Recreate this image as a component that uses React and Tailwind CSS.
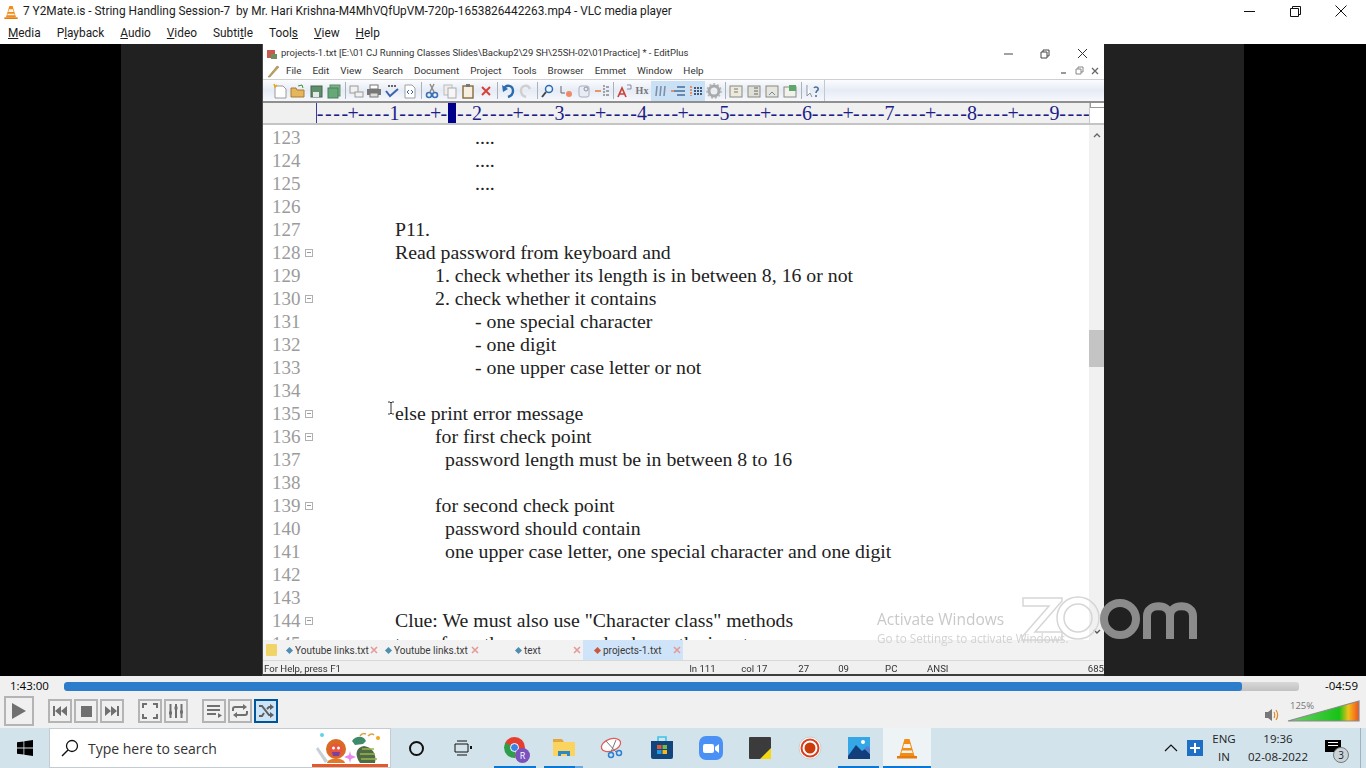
import React from 'react';

const uiFont = { fontFamily: 'Roboto, "Open Sans", sans-serif' };
const trayFont = { fontFamily: '"Open Sans", "Noto Sans", sans-serif' };

const codeRows = [
  { n: 123, pad: 'pl-[212px]', text: '....' },
  { n: 124, pad: 'pl-[212px]', text: '....' },
  { n: 125, pad: 'pl-[212px]', text: '....' },
  { n: 126 },
  { n: 127, pad: 'pl-[132px]', text: 'P11.' },
  { n: 128, fold: true, pad: 'pl-[132px]', text: 'Read password from keyboard and' },
  { n: 129, pad: 'pl-[172px]', text: '1. check whether its length is in between 8, 16 or not' },
  { n: 130, fold: true, pad: 'pl-[172px]', text: '2. check whether it contains' },
  { n: 131, pad: 'pl-[212px]', text: '- one special character' },
  { n: 132, pad: 'pl-[212px]', text: '- one digit' },
  { n: 133, pad: 'pl-[212px]', text: '- one upper case letter or not' },
  { n: 134 },
  { n: 135, fold: true, pad: 'pl-[132px]', text: 'else print error message' },
  { n: 136, fold: true, pad: 'pl-[172px]', text: 'for first check point' },
  { n: 137, pad: 'pl-[182px]', text: 'password length must be in between 8 to 16' },
  { n: 138 },
  { n: 139, fold: true, pad: 'pl-[172px]', text: 'for second check point' },
  { n: 140, pad: 'pl-[182px]', text: 'password should contain' },
  { n: 141, pad: 'pl-[182px]', text: 'one upper case letter, one special character and one digit' },
  { n: 142 },
  { n: 143 },
  { n: 144, fold: true, pad: 'pl-[132px]', text: 'Clue: We must also use "Character class" methods' },
  { n: 145, pad: 'pl-[132px]', text: 'to perform the necessary checks on the input' },
];

const rulerChars = Array.from({ length: 93 }, (_, i) => {
  const pos = i + 1;
  if (pos % 10 === 0) return String(pos / 10);
  if (pos % 5 === 0) return '+';
  return '-';
});

function Glyph({ children, w = 18 }) {
  return (
    <svg width={w} height="16" viewBox="0 0 18 16" className="shrink-0">
      {children}
    </svg>
  );
}

const Sep = () => <div className="w-px h-[17px] bg-[#a9b2bb] mx-[1.5px] shrink-0" />;

function EditorToolbar() {
  return (
    <div className="h-[21px] flex items-center pl-[8px] bg-gradient-to-b from-[#fbfcfe] via-[#e6ebf5] to-[#f6f8fc] shrink-0">
      <Glyph><path d="M4 3h8l3 3v9H4z" fill="#fff" stroke="#9a9a9a" /><path d="M3 1l1 3 2-2" stroke="#e8a917" fill="none" strokeWidth="1.5" /></Glyph>
      <Glyph><path d="M2 5h5l1 2h7v7H2z" fill="#e5b65c" stroke="#a67d34" /><path d="M9 3l4-1 1 3" stroke="#3d8f3d" fill="none" /></Glyph>
      <Glyph><rect x="4" y="3" width="11" height="11" fill="#5c8f6a" stroke="#46624f" /><rect x="6" y="9" width="6" height="5" fill="#e8e8e8" /></Glyph>
      <Glyph><rect x="5" y="2" width="10" height="11" fill="#7bb38b" stroke="#5d8c6a" /><rect x="3" y="5" width="10" height="10" fill="#66a877" stroke="#4c7f5a" /></Glyph>
      <Sep />
      <Glyph><rect x="3" y="3" width="8" height="7" fill="#f1f1f1" stroke="#9a9a9a" /><rect x="8" y="9" width="8" height="5" fill="#f1f1f1" stroke="#9a9a9a" /></Glyph>
      <Glyph><rect x="5" y="2" width="8" height="4" fill="#fff" stroke="#777" /><rect x="2" y="6" width="14" height="6" fill="#777" /><rect x="5" y="10" width="8" height="4" fill="#ddd" stroke="#777" /></Glyph>
      <Glyph><path d="M3 8l4 5 8-7" stroke="#3c64a8" strokeWidth="2" fill="none" /><path d="M5 3h9" stroke="#666" strokeWidth="2" strokeDasharray="2 1" /></Glyph>
      <Glyph><path d="M4 2h7l3 3v10H4z" fill="#fff" stroke="#a0a0a0" /><path d="M8 7l-2 2 2 2M10 7l2 2-2 2" stroke="#3c64a8" fill="none" /></Glyph>
      <Sep />
      <Glyph><path d="M11 1L7 9M7 1l4 8" stroke="#8a8a8a" strokeWidth="1.4" /><circle cx="6" cy="12" r="2.5" fill="none" stroke="#3a72b5" strokeWidth="1.6" /><circle cx="12" cy="12" r="2.5" fill="none" stroke="#3a72b5" strokeWidth="1.6" /></Glyph>
      <Glyph><rect x="3" y="2" width="8" height="10" fill="#eee" stroke="#bbb" /><rect x="7" y="5" width="8" height="10" fill="#f6f6f6" stroke="#aaa" /></Glyph>
      <Glyph><rect x="4" y="3" width="10" height="12" fill="#f6efe0" stroke="#8a6a3c" strokeWidth="1.4" /><rect x="7" y="1" width="4" height="3" fill="#777" /></Glyph>
      <Glyph><path d="M5 4l8 8M13 4l-8 8" stroke="#d8403a" strokeWidth="2" /></Glyph>
      <Sep />
      <Glyph><path d="M5 6c2-5 9-4 9 2 0 3-2 5-5 6" stroke="#2a6cb0" strokeWidth="2.4" fill="none" /><path d="M3 2l1 7 5-3z" fill="#2a6cb0" /></Glyph>
      <Glyph><path d="M13 6c-2-5-9-4-9 2 0 3 2 5 5 6" stroke="#cfcfcf" strokeWidth="2.4" fill="none" /></Glyph>
      <Sep />
      <Glyph><circle cx="10" cy="6" r="3.5" fill="#eef4fb" stroke="#2a6cb0" strokeWidth="1.5" /><path d="M7 9l-4 5" stroke="#444" strokeWidth="2" /></Glyph>
      <Glyph><path d="M4 3v7h4" stroke="#666" fill="none" /><circle cx="12" cy="11" r="3" fill="#ee8a6a" /></Glyph>
      <Glyph><rect x="4" y="3" width="10" height="11" rx="2" fill="#e8ecf3" stroke="#a8b0bd" /><circle cx="11" cy="6" r="2" fill="none" stroke="#8a94a5" /></Glyph>
      <Glyph><path d="M2 8h6" stroke="#e8783a" strokeWidth="1.5" /><path d="M11 2v12" stroke="#555" strokeDasharray="2 1" /><path d="M13 4h3M13 8h3M13 12h3" stroke="#555" /></Glyph>
      <Sep />
      <Glyph><path d="M3 14l4-9 4 9M4.500 11h5" stroke="#c9433a" strokeWidth="1.7" fill="none" /><path d="M12 2h4v4h-4" stroke="#8a8aa8" fill="none" /></Glyph>
      <div className="w-[18px] text-center text-[10px] font-bold text-[#777] shrink-0" style={{ fontFamily: '"Liberation Serif", serif' }}>Hx</div>
      <div className="flex items-center bg-[#c9e0f5] h-[20px] shrink-0">
        <Glyph><path d="M6 3L5 13M10 3L9 13M14 3l-1 10" stroke="#7f8faa" strokeWidth="1.6" /></Glyph>
        <Glyph><path d="M8 4h8M5 8h11M8 12h8" stroke="#4a6b96" strokeWidth="1.4" /><path d="M2 8h3" stroke="#e8783a" strokeWidth="1.5" /></Glyph>
        <Glyph><path d="M4 3v10" stroke="#e8783a" strokeDasharray="2 1" strokeWidth="1.5" /><path d="M7 5h8M7 8h8M7 11h8" stroke="#44597a" strokeWidth="2" strokeDasharray="2 1" /></Glyph>
      </div>
      <Glyph><circle cx="9" cy="8" r="5" fill="none" stroke="#a9a9a9" strokeWidth="3" /><circle cx="9" cy="8" r="7" fill="none" stroke="#b5b5b5" strokeWidth="1.5" strokeDasharray="2 2" /></Glyph>
      <Sep />
      <Glyph><rect x="3" y="3" width="12" height="11" fill="#eceadb" stroke="#8a8a80" /><path d="M7 6h4M7 9h4" stroke="#777" /></Glyph>
      <Glyph><rect x="3" y="3" width="12" height="11" fill="#dfe0d6" stroke="#8a8a80" /><path d="M9 5h4M9 8h4M9 11h4" stroke="#666" /></Glyph>
      <Glyph><rect x="3" y="3" width="12" height="11" fill="#e6e6dc" stroke="#8a8a80" /><path d="M6 12l3-3 3 3" stroke="#6b86b3" fill="none" /></Glyph>
      <Glyph><rect x="3" y="4" width="12" height="10" fill="#f2f2ec" stroke="#8a8a80" /><rect x="8" y="2" width="7" height="6" fill="#5ca86a" /></Glyph>
      <Sep />
      <Glyph><path d="M4 2v11l3-3 2 4" fill="#fff" stroke="#8a94a5" /><path d="M11 5c1-2 5-1 4 2-1 1-2 1-2 3M13 12v2" stroke="#4a6b96" strokeWidth="1.5" fill="none" /></Glyph>
      <div className="w-px h-full bg-[#c2c8d2] ml-[3px]" />
    </div>
  );
}

function Ruler() {
  return (
    <div className="h-[24px] flex border-t-2 border-b-2 border-t-[#8f8f8f] border-b-[#c4c4c4] bg-[#f0f0f0] shrink-0">
      <div className="w-[53px] shrink-0" />
      <div className="relative flex-1 flex items-center border-l border-[#3b3b9e] overflow-hidden text-[#1d1d8a] text-[20px] leading-none" style={{ fontFamily: '"Liberation Serif", serif' }}>
        <div className="w-0 -ml-[1px]" />
        {rulerChars.map((c, i) => (
          <span key={i} className="w-[8.25px] shrink-0 flex justify-center">{c}</span>
        ))}
        <span className="w-[6px] shrink-0 flex justify-center">-</span>
        <div className="absolute left-[131px] top-0 bottom-0 w-[8px] bg-[#00008b]" />
      </div>
      <div className="w-[15px] shrink-0 bg-white border-l border-[#c9c9c9]">
        <div className="h-[5px] border-b border-l border-[#999]" />
      </div>
    </div>
  );
}

function CodeArea() {
  return (
    <div className="relative flex-1 flex min-h-0 bg-white overflow-hidden">
      <div className="flex-1 overflow-hidden pt-[0.5px] text-[#222] text-[19.8px] leading-[23px]" style={{ fontFamily: '"Liberation Serif", serif' }}>
        {codeRows.map((r) => (
          <div key={r.n} className="h-[23px] flex whitespace-pre relative">
            <div className="w-0 overflow-visible">
              <div className="w-[40px] pl-[9px] text-[19px] text-[#9b9b9b]">{r.n}</div>
            </div>
            {r.fold && (
              <div className="absolute left-[42px] top-[8px] w-[8px] h-[8px] border border-[#b0b0b0] flex items-center">
                <div className="w-full h-px bg-[#9a9a9a] mx-[1px]" />
              </div>
            )}
            <div className={r.pad}>{r.text}</div>
          </div>
        ))}
      </div>
      <div className="w-[15px] shrink-0 bg-[#f1f1f1] flex flex-col items-center relative">
        <svg width="10" height="8" viewBox="0 0 10 8" className="mt-[6px]"><path d="M2 6l3-3 3 3" stroke="#666" strokeWidth="1.4" fill="none" /></svg>
        <div className="w-full h-[37px] bg-[#c4c4c4] mt-[191px]" />
        <svg width="10" height="8" viewBox="0 0 10 8" className="mt-auto mb-[4px]"><path d="M2 2l3 3 3-3" stroke="#555" strokeWidth="1.4" fill="none" /></svg>
      </div>
      {/* mouse pointer over the text */}
      <svg width="8" height="14" viewBox="0 0 8 14" className="absolute left-[124px] top-[276px]">
        <path d="M1 1h2l1 1 1-1h2M4 2v10M1 13h2l1-1 1 1h2" stroke="#333" fill="none" />
      </svg>
    </div>
  );
}

function EditorTab({ name, dot, active, w, pad }) {
  return (
    <div className={`h-full flex items-center shrink-0 text-[10px] text-[#3a3a3a] ${w} ${pad} ${active ? 'bg-[#cfe4f8]' : ''}`}>
      <span className={`w-[5px] h-[5px] rotate-45 mr-[3px] shrink-0 ${dot}`} />
      <span className="flex-1 whitespace-pre">{name}</span>
      <svg width="8" height="8" viewBox="0 0 8 8" className="mr-[2px] shrink-0"><path d="M1 1l6 6M7 1L1 7" stroke="#e59a9a" strokeWidth="1.6" /></svg>
    </div>
  );
}

function Editor() {
  return (
    <div className="w-[842px] shrink-0 flex flex-col h-full bg-white border-l border-[#4a4a4a] blur-[0.4px] text-[#333]" style={uiFont}>
      <div className="h-[19px] flex items-center bg-white shrink-0 relative">
        <svg width="14" height="14" viewBox="0 0 14 14" className="ml-[2px] mr-[2px]"><rect x="2" y="3" width="8" height="8" fill="#c85a4e" /><rect x="6" y="7" width="6" height="5" fill="#6f8f5e" /></svg>
        <span className="text-[9.5px] whitespace-pre">projects-1.txt [E:\01 CJ Running Classes Slides\Backup2\29 SH\25SH-02\01Practice] * - EditPlus</span>
        <svg width="12" height="12" viewBox="0 0 12 12" className="absolute left-[740px]"><path d="M1 6h9" stroke="#444" /></svg>
        <svg width="12" height="12" viewBox="0 0 12 12" className="absolute left-[776px]"><path d="M2 4h6v6H2zM4 4V2h6v6H8" stroke="#444" fill="none" /></svg>
        <svg width="12" height="12" viewBox="0 0 12 12" className="absolute left-[814px]"><path d="M1 1l9 9M10 1l-9 9" stroke="#333" /></svg>
      </div>
      <div className="h-[17px] flex items-center shrink-0 border-b border-[#d0d0d0] relative">
        <svg width="16" height="14" viewBox="0 0 16 14" className="ml-[3px]"><path d="M2 13L11 2l2 1L4 13z" fill="#c2a25a" stroke="#8a7a4a" strokeWidth=".5" /></svg>
        <div className="flex gap-[11px] text-[9.9px] ml-[4px]">
          {['File', 'Edit', 'View', 'Search', 'Document', 'Project', 'Tools', 'Browser', 'Emmet', 'Window', 'Help'].map((m) => (
            <span key={m}>{m}</span>
          ))}
        </div>
        <div className="absolute right-[5px] top-[3px] flex gap-[7px] items-center">
          <svg width="8" height="9" viewBox="0 0 8 9"><path d="M1 7h5" stroke="#777" strokeWidth="1.5" /></svg>
          <svg width="9" height="9" viewBox="0 0 9 9"><path d="M1 3h5v5H1zM3 3V1h5v5H6" stroke="#888" fill="none" /></svg>
          <svg width="8" height="9" viewBox="0 0 8 9"><path d="M1 2l6 6M7 2L1 8" stroke="#666" strokeWidth="1.3" /></svg>
        </div>
      </div>
      <EditorToolbar />
      <Ruler />
      <CodeArea />
      <div className="h-[20px] flex items-center bg-[#f2f2f2] shrink-0">
        <div className="w-[11px] h-[12px] bg-[#f1d467] ml-[3px] mr-[9px] rounded-[1px] shrink-0" />
        <EditorTab name="Youtube links.txt" dot="bg-[#4d8fb0]" w="w-[94px]" pad="pl-[1px]" />
        <EditorTab name="Youtube links.txt" dot="bg-[#4d8fb0]" w="w-[101px]" pad="pl-[6px]" />
        <EditorTab name="text" dot="bg-[#4d8fb0]" w="w-[102px]" pad="pl-[35px]" />
        <EditorTab active name="projects-1.txt" dot="bg-[#c9583d]" w="w-[100px]" pad="pl-[12px]" />
      </div>
      <div className="h-[16px] flex items-center pt-[2px] bg-[#f0f0f0] border-t border-[#d8d8d8] border-b-2 border-b-[#3d3d3d] text-[9.6px] leading-none shrink-0 pl-[1px]">
        <span className="w-[426px]">For Help, press F1</span>
        <span className="w-[52px]">ln 111</span>
        <span className="w-[57px]">col 17</span>
        <span className="w-[40px]">27</span>
        <span className="w-[47px]">09</span>
        <span className="w-[42px]">PC</span>
        <span className="w-[161px]">ANSI</span>
        <span>685</span>
      </div>
    </div>
  );
}

function CtrlButton({ children, on, big }) {
  const size = big ? 'w-[30px] h-[30px]' : 'w-[24px] h-[24px]';
  const tone = on ? 'bg-[#cce4f7] border-[#005499]' : 'border-[#b4b4b4]';
  return <div className={`${size} ${tone} border-2 flex items-center justify-center shrink-0`}>{children}</div>;
}

function Controls() {
  return (
    <div className="h-[52px] bg-[#f0f0f0] shrink-0 flex flex-col text-black" style={trayFont}>
      <div className="h-[20px] flex items-center">
        <span className="w-[64px] pl-[10px] text-[11.5px]">1:43:00</span>
        <div className="w-[1235px] h-[9px] rounded-[3px] bg-gradient-to-b from-[#d8d8d8] to-[#c2c2c2] overflow-hidden">
          <div className="w-[1178px] h-full bg-[#2b7ccb] rounded-[3px]" />
        </div>
        <span className="flex-1 text-right pr-[8px] text-[11.5px]">-04:59</span>
      </div>
      <div className="flex-1 flex items-center pl-[4px] pb-[2px] relative">
        <CtrlButton big>
          <svg width="16" height="18" viewBox="0 0 16 18"><path d="M1 1l14 8-14 8z" fill="#707070" /></svg>
        </CtrlButton>
        <div className="flex gap-[2px] ml-[14px]">
          <CtrlButton><svg width="16" height="12" viewBox="0 0 16 12"><path d="M1 1h2v10H1zM9 1v10L3 6zM15 1v10L9 6z" fill="#707070" /></svg></CtrlButton>
          <CtrlButton><div className="w-[11px] h-[11px] bg-[#707070]" /></CtrlButton>
          <CtrlButton><svg width="16" height="12" viewBox="0 0 16 12"><path d="M13 1h2v10h-2zM7 1v10l6-5zM1 1v10l6-5z" fill="#707070" /></svg></CtrlButton>
        </div>
        <div className="flex gap-[2px] ml-[14px]">
          <CtrlButton><svg width="16" height="16" viewBox="0 0 16 16"><path d="M1 5V1h4M11 1h4v4M15 11v4h-4M5 15H1v-4" stroke="#707070" strokeWidth="2" fill="none" /></svg></CtrlButton>
          <CtrlButton><svg width="16" height="16" viewBox="0 0 16 16"><path d="M2.500 1v14M8 1v14M13.500 1v14" stroke="#707070" strokeWidth="2" /><path d="M1 10h3M6.500 5h3M12 9h3" stroke="#707070" strokeWidth="3" /></svg></CtrlButton>
        </div>
        <div className="flex gap-[2px] ml-[14px]">
          <CtrlButton><svg width="16" height="14" viewBox="0 0 16 14"><path d="M1 2h13M1 6h13M1 10h9" stroke="#707070" strokeWidth="2" /><path d="M12 9v5l4-2.500z" fill="#707070" /></svg></CtrlButton>
          <CtrlButton><svg width="16" height="14" viewBox="0 0 16 14"><path d="M1 7V5a2 2 0 012-2h10M15 7v2a2 2 0 01-2 2H3" stroke="#707070" strokeWidth="2" fill="none" /><path d="M11 0l4 3-4 3zM5 8l-4 3 4 3z" fill="#707070" /></svg></CtrlButton>
          <CtrlButton on><svg width="16" height="14" viewBox="0 0 16 14"><path d="M1 2h3l7 9h2M1 12h3l2-3M9 5l2-2h2" stroke="#606060" strokeWidth="2" fill="none" /><path d="M12 0l4 3-4 3zM12 8l4 3-4 3z" fill="#606060" /></svg></CtrlButton>
        </div>
        <div className="ml-auto mr-[6px] flex items-end gap-[7px]">
          <svg width="15" height="14" viewBox="0 0 15 14"><path d="M0 4h3l4-3v12l-4-3H0z" fill="#777" /><path d="M9 4c1 2 1 4 0 6M11 2c2 3 2 7 0 10" stroke="#e08a2c" strokeWidth="1.2" fill="none" /></svg>
          <div className="relative w-[73px] h-[22px]">
            <svg width="73" height="22" viewBox="0 0 73 22">
              <defs>
                <linearGradient id="vol" x1="0" x2="1" y1="0" y2="0">
                  <stop offset="0" stopColor="#6ed06a" />
                  <stop offset="0.72" stopColor="#17c317" />
                  <stop offset="0.85" stopColor="#f2c01c" />
                  <stop offset="1" stopColor="#f0501e" />
                </linearGradient>
              </defs>
              <path d="M1 21L72 1v20z" fill="url(#vol)" stroke="#8a8a8a" strokeWidth="1.2" />
            </svg>
            <span className="absolute left-[3px] top-[-1px] text-[9.5px] text-[#777]">125%</span>
          </div>
        </div>
      </div>
    </div>
  );
}

function TaskIcon({ children, w = 49, active, bar, tail }) {
  return (
    <div className={`relative h-full flex items-center justify-center shrink-0 ${active ? 'bg-[#eef3f6]' : ''}`} style={{ width: w }}>
      {children}
      {bar && (
        <div className={`absolute bottom-0 h-[2px] bg-[#0a78d4] ${active ? 'left-0 right-0' : 'left-1 right-1'}`}>
          {tail && <div className="absolute right-0 top-0 bottom-0 w-[8px] bg-[#6aa9e0]" />}
        </div>
      )}
    </div>
  );
}

function VlcCone({ size = 24 }) {
  return (
    <svg width={size} height={size} viewBox="0 0 24 24">
      <path d="M9.500 3h5l5 17h-15z" fill="#f28c14" />
      <path d="M9 8h6l1 4H8zM7 14.500h10l.6 2.500H6.400z" fill="#f4f4f4" />
      <path d="M2 20h20v2.500H2z" fill="#e57b0c" />
    </svg>
  );
}

function Taskbar() {
  return (
    <div className="h-[40px] bg-[#d3e3eb] flex shrink-0 items-stretch text-[#1a1a1a]" style={trayFont}>
      <div className="w-[49px] flex items-center justify-center shrink-0">
        <svg width="16" height="16" viewBox="0 0 16 16"><path d="M0 2.300L6.500 1.400v6.100H0zM7.300 1.300L16 0v7.500H7.300zM0 8.500h6.500v6.100L0 13.700zM7.300 8.500H16V16l-8.700-1.300z" fill="#000" /></svg>
      </div>
      <div className="w-[342px] bg-white border border-[#c4ccd2] flex items-center shrink-0 relative overflow-hidden">
        <svg width="18" height="18" viewBox="0 0 18 18" className="ml-[11px]"><circle cx="11" cy="7" r="5.500" stroke="#111" strokeWidth="1.3" fill="none" /><path d="M7 11l-6 6" stroke="#111" strokeWidth="1.5" /></svg>
        <span className="ml-[9px] text-[14px] text-[#333]">Type here to search</span>
        <svg width="78" height="38" viewBox="0 0 78 38" className="absolute right-0 top-0">
          <path d="M0 35h76v3H0z" fill="#e4582a" />
          <circle cx="10" cy="6" r="2" fill="#5fd3e6" />
          <circle cx="66" cy="9" r="2" fill="#f2a51c" />
          <path d="M6 18l10 14-3 2L4 20z" fill="#c9cfd6" />
          <circle cx="24" cy="20" r="10" fill="#d96a26" />
          <circle cx="24" cy="21" r="6.500" fill="#e9553c" />
          <circle cx="21.500" cy="19" r="1.500" fill="#fff" />
          <circle cx="26.500" cy="19" r="1.500" fill="#fff" />
          <path d="M20 23h8l-1 4h-6z" fill="#7a3fa0" />
          <path d="M15 34c1-6 17-6 18 0z" fill="#e2792a" />
          <path d="M39 26l5 2-5 2-1 4-1-4-5-2 5-2 1-4z" fill="#e888ef" />
          <path d="M40 12c4-6 12-5 14 0l-3 3-8 1z" fill="#3f8a6a" />
          <path d="M48 34c-6-8-4-16 4-17 8 1 13 8 11 17z" fill="#4f6b45" />
          <path d="M50 20h12M48 25h15M49 30h16" stroke="#9ab54c" strokeWidth="1.5" />
          <path d="M48 7c2-3 4-3 6-2M56 7c2-2 4-3 6-1" stroke="#d9a441" strokeWidth="1.5" fill="none" />
        </svg>
      </div>
      <TaskIcon w={50}>
        <div className="w-[15px] h-[15px] rounded-full border-[2.5px] border-[#111]" />
      </TaskIcon>
      <TaskIcon w={44}>
        <svg width="18" height="18" viewBox="0 0 18 18"><path d="M3 2h10M3 16h10M1 5h13v8H1z" stroke="#111" fill="none" /><path d="M16 7h2v3h-2z" fill="#111" /></svg>
      </TaskIcon>
      <div className="w-[5px] shrink-0" />
      <TaskIcon w={50} bar>
        <div className="relative w-[22px] h-[22px]">
          <div className="w-[21px] h-[21px] rounded-full bg-[conic-gradient(#e5402f_0_33%,#f6c12b_33%_50%,#2f9e4a_50%_83%,#e5402f_83%)] flex items-center justify-center">
            <div className="w-[9px] h-[9px] rounded-full bg-[#3b82e8] border border-white" />
          </div>
          <div className="absolute right-[-4px] bottom-[-4px] w-[15px] h-[15px] rounded-full bg-[#7a52bd] text-white text-[9px] flex items-center justify-center">R</div>
        </div>
      </TaskIcon>
      <TaskIcon w={47} bar tail>
        <svg width="22" height="20" viewBox="0 0 22 20"><path d="M0 1h9l2 3h-11z" fill="#e3a73a" /><path d="M0 4h22v14H0z" fill="#fbd45f" /><path d="M5 13h12v5h-3v-2H8v2H5z" fill="#2d88c9" /></svg>
      </TaskIcon>
      <TaskIcon w={50}>
        <svg width="24" height="22" viewBox="0 0 24 22"><ellipse cx="11" cy="8" rx="10" ry="6" transform="rotate(-20 11 8)" fill="#fff" stroke="#e25a5a" strokeWidth="1.3" /><path d="M6 4l10 11M16 3L11 15" stroke="#777" /><circle cx="11" cy="18" r="2.500" fill="none" stroke="#2d7fd1" strokeWidth="1.500" /><circle cx="19" cy="16" r="2.500" fill="none" stroke="#2d7fd1" strokeWidth="1.500" /></svg>
      </TaskIcon>
      <TaskIcon w={49}>
        <svg width="24" height="24" viewBox="0 0 24 24"><path d="M8 5V1h8v4" stroke="#3cc3ec" strokeWidth="1.600" fill="none" /><path d="M1 5h22v16a2 2 0 01-2 2H3a2 2 0 01-2-2z" fill="#12457c" /><path d="M7 9h4.500v4H7z" fill="#e4572e" /><path d="M12.500 9H17v4h-4.500z" fill="#7cb83a" /><path d="M7 14h4.500v4H7z" fill="#1e9be0" /><path d="M12.500 14H17v4h-4.500z" fill="#f6b81c" /></svg>
      </TaskIcon>
      <TaskIcon w={49}>
        <svg width="24" height="24" viewBox="0 0 24 24"><rect width="24" height="24" rx="7" fill="#4a90f5" /><rect x="4" y="8" width="11" height="9" rx="2" fill="#fff" /><path d="M16 11l4-3v9l-4-3z" fill="#fff" /></svg>
      </TaskIcon>
      <TaskIcon w={50}>
        <svg width="22" height="22" viewBox="0 0 22 22"><rect width="22" height="22" rx="1" fill="#3b3b3b" /><path d="M22 11v11H11z" fill="#f5d90f" /></svg>
      </TaskIcon>
      <TaskIcon w={49}>
        <svg width="24" height="24" viewBox="0 0 24 24"><circle cx="12" cy="12" r="11" fill="#fff" stroke="#ccc" /><circle cx="12" cy="12" r="8.500" fill="none" stroke="#d8401f" strokeWidth="2" /><circle cx="12" cy="12" r="5.500" fill="#c93d0d" /></svg>
      </TaskIcon>
      <TaskIcon w={49} bar>
        <svg width="22" height="22" viewBox="0 0 22 22"><rect width="22" height="22" fill="#35a7e6" /><circle cx="15" cy="5" r="2" fill="#fff" /><path d="M0 19L8 8l6 6 3-2 5 5v5H0z" fill="#123e7c" /><path d="M14 14l3-2 5 5v-6l-3-2z" fill="#5a7fd1" /></svg>
      </TaskIcon>
      <TaskIcon w={48} active bar>
        <VlcCone />
      </TaskIcon>
      <div className="flex-1 flex items-center justify-end relative text-[11.5px] text-[#222] border-r-[5px] border-r-[#d3e3eb]">
        <svg width="14" height="8" viewBox="0 0 14 8" className="absolute left-[233px]"><path d="M1 7l6-6 6 6" stroke="#111" strokeWidth="1.200" fill="none" /></svg>
        <div className="absolute left-[256px] w-[16px] h-[16px] bg-[#1f6fc4] flex items-center justify-center">
          <svg width="10" height="10" viewBox="0 0 10 10"><path d="M5 0v10M0 5h10" stroke="#fff" strokeWidth="2" /></svg>
        </div>
        <div className="absolute left-[281px] w-[24px] text-center leading-[18px]">ENG<br />IN</div>
        <div className="absolute left-[314px] w-[66px] text-center leading-[18px] whitespace-nowrap">19:36<br />02-08-2022</div>
        <div className="absolute left-[394px] top-[12px] w-[16px] h-[12px] bg-black">
          <div className="h-px bg-white mt-[2px] mx-[3px]" />
          <div className="h-px bg-white mt-[2px] mx-[3px]" />
        </div>
        <div className="absolute left-[402px] top-[19px] w-[16px] h-[16px] rounded-full bg-[#c9d4da] border border-[#777] text-[10px] flex items-center justify-center">3</div>
        <div className="absolute right-0 top-0 bottom-0 w-px bg-[#9fb2bd]" />
      </div>
    </div>
  );
}

export default function App() {
  return (
    <div className="w-[1366px] h-screen bg-white flex flex-col overflow-hidden relative">
      <div className="h-[24px] shrink-0 flex items-center text-[11.85px] text-[#1c1c1c] relative whitespace-pre" style={uiFont}>
        <div className="ml-[3px] mr-[4px]"><VlcCone size={16} /></div>
        <span>7 Y2Mate.is - String Handling Session-7  by Mr. Hari Krishna-M4MhVQfUpVM-720p-1653826442263.mp4 - VLC media player</span>
        <div className="absolute right-[2px] top-0 flex">
          <div className="w-[46px] h-[22px] flex items-center justify-center"><svg width="11" height="11" viewBox="0 0 11 11"><path d="M0 5.500h11" stroke="#111" /></svg></div>
          <div className="w-[46px] h-[22px] flex items-center justify-center"><svg width="11" height="11" viewBox="0 0 11 11"><path d="M.5 2.500h8v8h-8zM2.500 2.500v-2h8v8h-2" stroke="#111" fill="none" /></svg></div>
          <div className="w-[46px] h-[22px] flex items-center justify-center"><svg width="12" height="12" viewBox="0 0 12 12"><path d="M.5.500l11 11M11.500.500l-11 11" stroke="#111" /></svg></div>
        </div>
      </div>
      <div className="h-[20px] shrink-0 flex items-center gap-[16px] pl-[8px] text-[11.85px] text-[#1c1c1c]" style={uiFont}>
        <span><u>M</u>edia</span>
        <span>P<u>l</u>ayback</span>
        <span><u>A</u>udio</span>
        <span><u>V</u>ideo</span>
        <span>Subti<u>t</u>le</span>
        <span>Tool<u>s</u></span>
        <span><u>V</u>iew</span>
        <span><u>H</u>elp</span>
      </div>
      <div className="flex-1 min-h-0 flex bg-black">
        <div className="w-[121px] shrink-0" />
        <div className="w-[141px] shrink-0 bg-[#212121]" />
        <Editor />
        <div className="w-[140px] shrink-0 bg-[#212121]" />
      </div>
      <Controls />
      <Taskbar />

      {/* Zoom watermark and the Windows activation notice sit on top of the video */}
      <svg width="178" height="50" viewBox="0 0 178 50" className="absolute left-[1021px] top-[596px] pointer-events-none">
        <path d="M2 2h39v3L14 36h27v8H1v-3L28 10H2z" fill="none" stroke="#d6d6d6" strokeWidth="1.500" />
        <circle cx="57" cy="22" r="21" fill="none" stroke="#d6d6d6" strokeWidth="1.500" />
        <circle cx="57" cy="22" r="14" fill="none" stroke="#d6d6d6" strokeWidth="1.500" />
        <circle cx="99" cy="23" r="16" fill="none" stroke="#8b8b8b" strokeWidth="8" />
        <path d="M126 43V20c0-13 23-13 23 0v23M149 20c0-13 23-13 23 0v23" stroke="#8b8b8b" strokeWidth="8" fill="none" />
      </svg>
      <div className="absolute left-[877px] top-[612px] text-[#c9c9c9] leading-none pointer-events-none" style={trayFont}>
        <div className="text-[15.5px]">Activate Windows</div>
        <div className="text-[11.7px] mt-[5px] text-[#d2d2d2]">Go to Settings to activate Windows.</div>
      </div>
    </div>
  );
}
